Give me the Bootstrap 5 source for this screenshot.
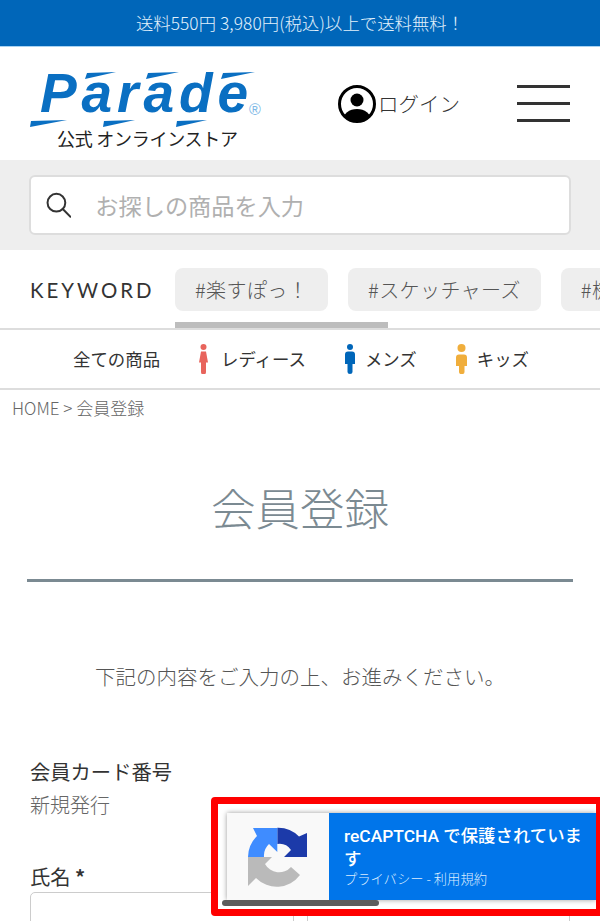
<!DOCTYPE html>
<html lang="ja">
<head>
  <meta charset="UTF-8">
  <meta name="viewport" content="width=device-width, initial-scale=1.0">
  <title>会員登録 | Parade</title>
  <link href="https://cdn.jsdelivr.net/npm/bootstrap@5.3.0/dist/css/bootstrap.min.css" rel="stylesheet">
  <style>
    html, body { height: 100%; overflow: hidden; }
    body {
      font-family: "Noto Sans CJK JP", "Noto Sans", sans-serif;
      font-weight: 300;
      color: #333;
      background: #fff;
    }
    .page-wrap { height: 921px; overflow: hidden; position: relative; }
    .ship-bar {
      height: 47px;
      background: #0066b9;
      border-bottom: 1px solid #a9d3f2;
      color: #e2f1fc;
      font-size: 17.3px;
      letter-spacing: .1px;
    }
    .site-head { height: 113px; padding: 0 30px; }
    .site-logo { margin-top: 9px; flex: none; }
    .login-link { font-size: 20.5px; color: #333; gap: 2px; margin-left: 74px; text-decoration: none; }
    .burger { width: 53px; margin-left: auto; display: flex; flex-direction: column; gap: 14px; }
    .burger span { height: 3px; background: #333; display: block; }
    .search-band { height: 90px; background: #eee; padding: 15px 29px; }
    .search-box {
      height: 60px;
      background: #fff;
      border: 2px solid #ddd;
      border-radius: 6px;
      padding-left: 15px;
      gap: 24px;
    }
    .search-box .form-control {
      border: 0;
      box-shadow: none;
      padding: 0;
      font-size: 23.2px;
      background: transparent;
    }
    .search-box .form-control::placeholder { color: #b0b0b0; }
    .key-row { height: 80px; border-bottom: 2px solid #ddd; padding-left: 30px; overflow: hidden; position: relative; }
    .key-label { font-family: "Lato", sans-serif; font-weight: 400; font-size: 20.4px; letter-spacing: 3px; color: #333; width: 145px; flex: none; line-height: 80px; }
    .key-pills { gap: 20px; padding-top: 18px; }
    .key-pill {
      height: 43px;
      background: #eee;
      border-radius: 8px;
      padding: 0 20px;
      font-size: 20px;
      letter-spacing: .4px;
      color: #555;
      flex: none;
      line-height: 43px;
    }
    .key-thumb { position: absolute; left: 175px; bottom: 0; width: 213px; height: 6px; background: #bdbdbd; }
    .cat-row { height: 60px; border-bottom: 2px solid #ddd; font-size: 17.4px; font-weight: 400; color: #333; gap: 39px; padding-left: 2px; }
    .cat-item { gap: 10px; }
    .cat-item-lady { gap: 13px; }
    .crumb { font-size: 17px; color: #666; padding: 6px 12px 0; line-height: 24px; }
    .page-title {
      margin: 53px 27px 0;
      height: 109px;
      font-size: 44.5px;
      font-weight: 300;
      color: #7b8a92;
      text-align: center;
      border-bottom: 3px solid #7b8a92;
      line-height: 68px;
    }
    .lead-note { margin-top: 76px; text-align: center; font-size: 20.5px; color: #555; line-height: 36px; }
    .form-area { padding: 0 30px; margin-top: 59px; }
    .field-label { font-size: 20.3px; font-weight: 400; color: #333; line-height: 36px; }
    .field-value { font-size: 20px; color: #666; line-height: 32px; margin-bottom: 37px; }
    .field-label-tight { margin-bottom: -3px; }
    .req-mark { font-size: 20px; font-weight: 700; }
    .name-inputs { gap: 13px; }
    .name-inputs .form-control { height: 60px; border: 1px solid #ccc; border-radius: 5px; }
    .recaptcha-frame {
      position: absolute;
      left: 211px;
      top: 797px;
      width: 392px;
      height: 119px;
      border: 7px solid #f00;
      border-radius: 4px;
      background: #fff;
      padding: 9px 0 0 9px;
      overflow: hidden;
    }
    .recaptcha-badge { height: 87px; box-shadow: 0 0 5px rgba(0,0,0,.4); }
    .recaptcha-logo { width: 102px; flex: none; background: #f9f9f9; }
    .recaptcha-text { background: #0075ea; color: #fff; flex: 1; padding: 12px 10px 0 15px; }
    .recaptcha-title { font-family: "Roboto", "Noto Sans CJK JP", sans-serif; font-size: 17.4px; font-weight: 500; line-height: 23px; }
    .recaptcha-links { font-size: 13.3px; line-height: 20px; color: #dcecff; margin-top: -2px; }
    .recaptcha-scroll { position: absolute; left: 4px; bottom: 3px; width: 157px; height: 6px; border-radius: 3px; background: #5c5c5c; }
  </style>
</head>
<body>
  <div class="page-wrap">
    <div class="ship-bar d-flex align-items-center justify-content-center">送料550円 3,980円(税込)以上で送料無料！</div>

    <header class="site-head d-flex align-items-center">
      <svg width="234" height="92" viewBox="0 -10 234 92" class="site-logo">
        <g fill="#0a6fc2">
          <polygon points="57,1 86,0 55,7"/>
          <polygon points="118,1 149,0 116,7"/>
          <polygon points="193,1 225,0 191,7"/>
          <polygon points="1,49 37,48 0,55"/>
          <polygon points="74,49 105,48 73,55"/>
          <polygon points="147,49 177,48 146,55"/>
          <text x="10" y="40" font-family="Liberation Sans" font-size="55" font-weight="700" font-style="italic" textLength="208" lengthAdjust="spacing">Parade</text>
        </g>
        <text x="219" y="43" font-family="Liberation Sans" font-size="16" fill="#7db8e6">®</text>
        <text x="27" y="74" font-family="Noto Sans CJK JP" font-size="18" font-weight="400" fill="#222" textLength="181">公式 オンラインストア</text>
      </svg>
      <a href="#" class="login-link d-flex align-items-center">
        <svg width="38" height="38" viewBox="0 0 38 38">
          <defs><clipPath id="userClip"><circle cx="19" cy="19" r="17"/></clipPath></defs>
          <circle cx="19" cy="19" r="17.5" fill="#fff" stroke="#000" stroke-width="3"/>
          <circle cx="19" cy="15" r="6.5" fill="#000"/>
          <ellipse cx="19" cy="35" rx="14" ry="11" fill="#000" clip-path="url(#userClip)"/>
        </svg>
        <span>ログイン</span>
      </a>
      <div class="burger"><span></span><span></span><span></span></div>
    </header>

    <div class="search-band">
      <div class="search-box d-flex align-items-center">
        <svg width="28" height="28" viewBox="0 0 28 28" fill="none" stroke="#333" stroke-width="2.2">
          <circle cx="11.5" cy="11.5" r="9.8"/>
          <path d="M18.5 18.5 27 27" stroke-linecap="round"/>
        </svg>
        <input type="text" class="form-control" placeholder="お探しの商品を入力">
      </div>
    </div>

    <div class="key-row d-flex">
      <div class="key-label">KEYWORD</div>
      <div class="key-pills d-flex">
        <div class="key-pill">#楽すぽっ！</div>
        <div class="key-pill">#スケッチャーズ</div>
        <div class="key-pill">#機能性</div>
      </div>
      <div class="key-thumb"></div>
    </div>

    <nav class="cat-row d-flex align-items-center justify-content-center">
      <span>全ての商品</span>
      <span class="cat-item cat-item-lady d-flex align-items-center">
        <svg width="9" height="30" viewBox="0 0 9 30" fill="#e8645c">
          <circle cx="4.5" cy="3" r="3"/>
          <path d="M2 7.5h5l2 11H7v9.5a2 2 0 0 1-5 0v-9.5H0z"/>
        </svg>
        レディース
      </span>
      <span class="cat-item d-flex align-items-center">
        <svg width="10" height="30" viewBox="0 0 10 30" fill="#0066b9">
          <circle cx="5" cy="3" r="3"/>
          <path d="M3 7.500h4a3 3 0 0 1 3 3V20H7.500v8a2.500 2 0 0 1-5 0v-8H0v-9.500a3 3 0 0 1 3-3z"/>
        </svg>
        メンズ
      </span>
      <span class="cat-item d-flex align-items-center">
        <svg width="11" height="30" viewBox="0 0 11 30" fill="#f0ae3c">
          <circle cx="5.500" cy="4" r="4"/>
          <path d="M3 10.500h5a3 3 0 0 1 3 3V22H8.500v6a2.500 2 0 0 1-5.500 0v-6H0v-8.500a3 3 0 0 1 3-3z"/>
        </svg>
        キッズ
      </span>
    </nav>

    <div class="crumb">HOME &gt; 会員登録</div>

    <h1 class="page-title">会員登録</h1>

    <p class="lead-note mb-0">下記の内容をご入力の上、お進みください。</p>

    <form class="form-area">
      <div class="field-label">会員カード番号</div>
      <div class="field-value">新規発行</div>
      <div class="field-label field-label-tight">氏名 <span class="req-mark">*</span></div>
      <div class="name-inputs d-flex">
        <input type="text" class="form-control">
        <input type="text" class="form-control">
      </div>
    </form>

    <div class="recaptcha-frame">
      <div class="recaptcha-badge d-flex">
        <div class="recaptcha-logo d-flex align-items-center justify-content-center">
          <svg width="60" height="60" viewBox="0 0 60 60">
            <path d="M29.300.7A29 29 0 0 1 51 9.500L59 6V30H36L43 23A14 14 0 0 0 29.300 17Z" fill="#1c3aa9"/>
            <path d="M0 30H24L17 37A16 16 0 0 0 43 40L52 48A29 29 0 0 1 8 51L0 59Z" fill="#bababa"/>
            <path d="M0 30A30 30 0 0 1 9 9L5 1H29.300V25L21 17A16 16 0 0 0 16 30Z" fill="#3f8cff"/>
          </svg>
        </div>
        <div class="recaptcha-text">
          <div class="recaptcha-title">reCAPTCHA で保護されています</div>
          <div class="recaptcha-links">プライバシー - 利用規約</div>
        </div>
      </div>
      <div class="recaptcha-scroll"></div>
    </div>
  </div>

  <script src="https://cdn.jsdelivr.net/npm/bootstrap@5.3.0/dist/js/bootstrap.bundle.min.js"></script>
</body>
</html>
